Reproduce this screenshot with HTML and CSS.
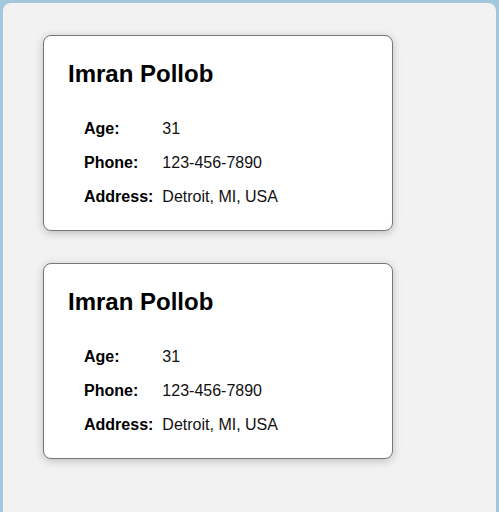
FILE: index.html
```html
<!DOCTYPE html>
<html lang="en">
<head>
<meta charset="utf-8">
<title>Profiles</title>
<link rel="stylesheet" href="styles.css">
</head>
<body>
<main class="page">
  <section class="card">
    <h2 class="card-title">Imran Pollob</h2>
    <dl class="info">
      <dt>Age:</dt><dd>31</dd>
      <dt>Phone:</dt><dd>123-456-7890</dd>
      <dt>Address:</dt><dd>Detroit, MI, USA</dd>
    </dl>
  </section>
  <section class="card">
    <h2 class="card-title">Imran Pollob</h2>
    <dl class="info">
      <dt>Age:</dt><dd>31</dd>
      <dt>Phone:</dt><dd>123-456-7890</dd>
      <dt>Address:</dt><dd>Detroit, MI, USA</dd>
    </dl>
  </section>
</main>
</body>
</html>
```
FILE: styles.css
```css
html, body {
  margin: 0;
  padding: 0;
}
body {
  background: #a4c7dd;
  font-family: "Liberation Sans", Arial, sans-serif;
  color: #000;
  padding: 3px;
  box-sizing: border-box;
  min-height: 100vh;
}
.page {
  background: #f2f2f2;
  border-radius: 8px;
  padding: 32px 40px 60px;
  min-height: 560px;
  display: flex;
  flex-direction: column;
  align-items: flex-start;
  gap: 32px;
}
.card {
  width: 350px;
  box-sizing: border-box;
  background: #fff;
  border: 1px solid #777;
  border-radius: 8px;
  box-shadow: 0 2px 8px rgba(0, 0, 0, 0.22);
  padding: 24px 24px 16px;
}
.card-title {
  margin: 0 0 24px;
  font-size: 24px;
  font-weight: bold;
  line-height: normal;
}
.info {
  margin: 0 0 0 16px;
  display: grid;
  grid-template-columns: max-content 1fr;
  column-gap: 9px;
  font-size: 16px;
}
.info dt,
.info dd {
  margin: 0;
  padding: 8px 0;
  line-height: 18px;
}
.info dt {
  font-weight: bold;
}
.info dd {
  color: #111;
}
```
